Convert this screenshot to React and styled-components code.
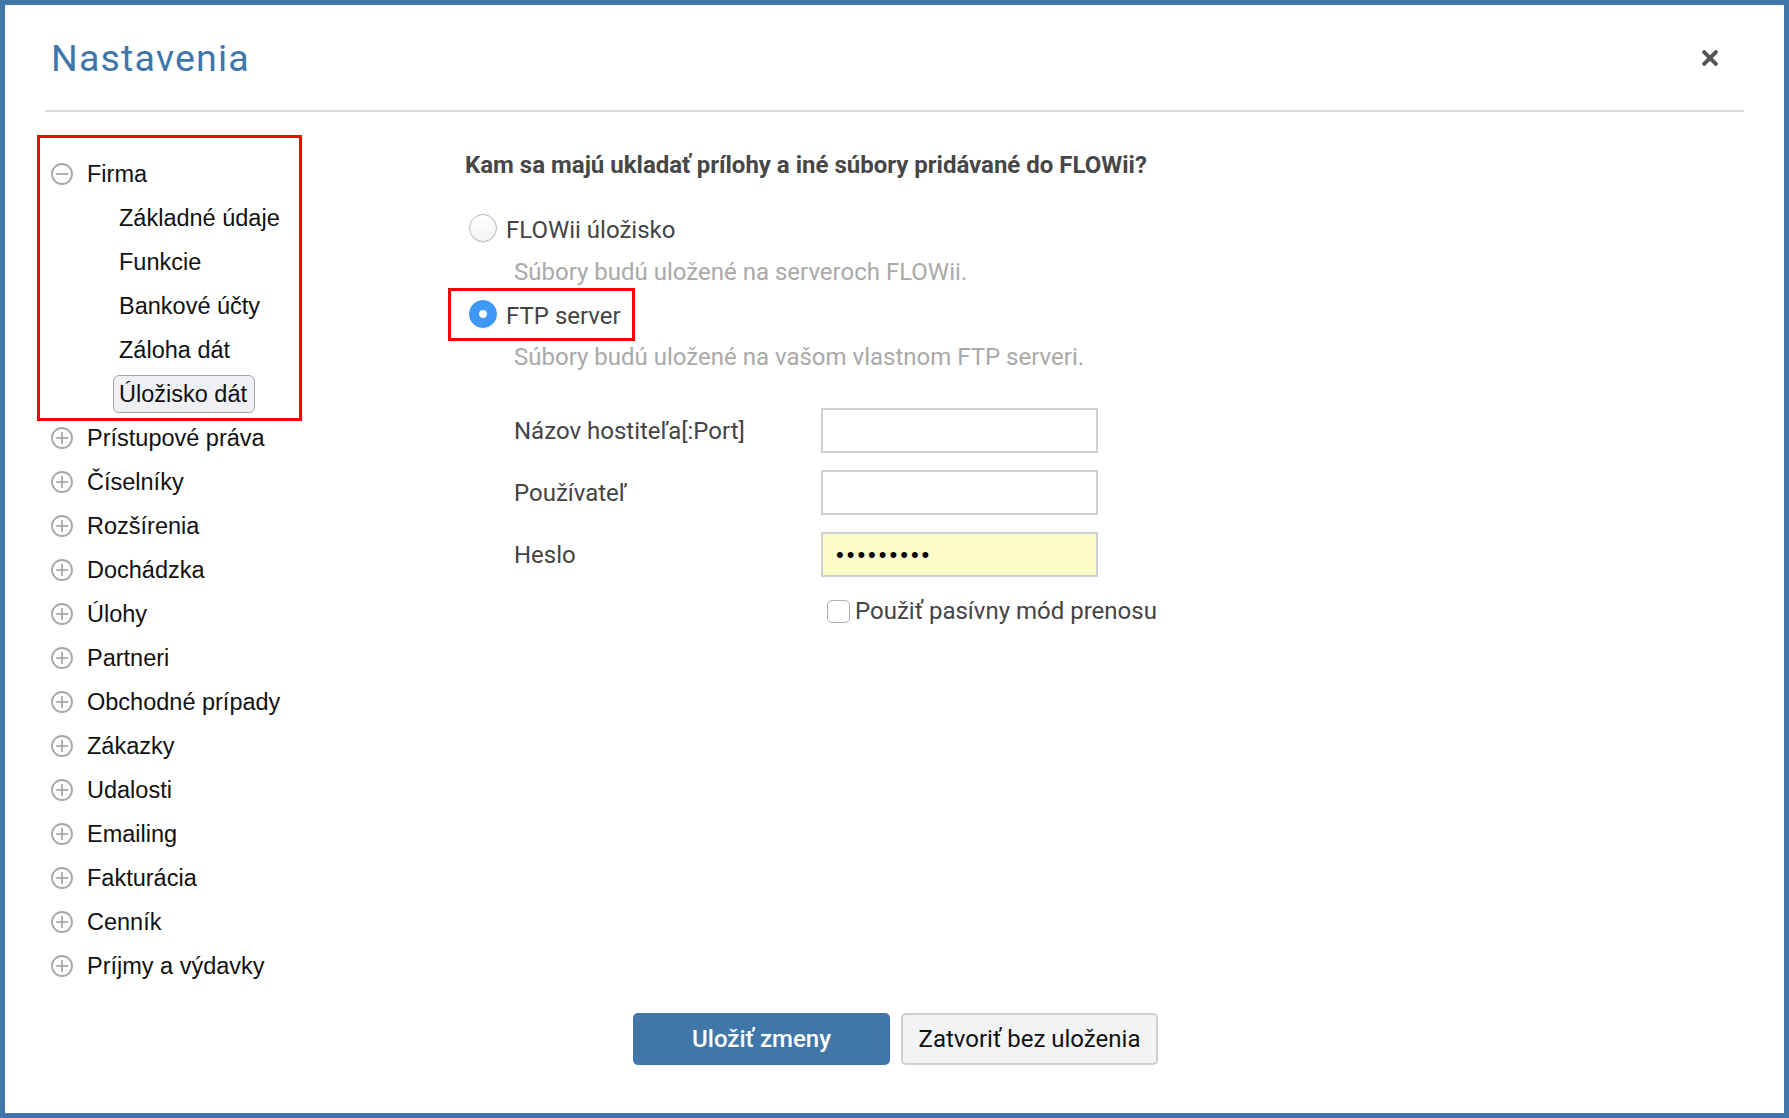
import React from "react";
import styled, { createGlobalStyle } from "styled-components";

const GlobalStyle = createGlobalStyle`
  html, body {
    margin: 0;
    padding: 0;
    background: #fff;
  }
  body {
    font-family: Roboto, "Liberation Sans", Arial, sans-serif;
  }
  * {
    box-sizing: border-box;
  }
`;

const StyledModal = styled.div`
  height: 100vh;
  display: flex;
  flex-direction: column;
  border: 5px solid #3f75a8;
  background: #fff;
`;

const StyledHeader = styled.div`
  margin: 0 40px;
  padding: 31px 26px 30px 6px;
  display: flex;
  align-items: center;
  justify-content: space-between;
  border-bottom: 2px solid #dcdcdc;
`;

const StyledTitle = styled.h1`
  margin: 0;
  font-family: Roboto, sans-serif;
  font-weight: 400;
  font-size: 37.5px;
  line-height: 44px;
  letter-spacing: 1.2px;
  color: #3f76aa;
`;

const StyledClose = styled.button`
  width: 16px;
  height: 16px;
  padding: 0;
  border: none;
  background: none;
  cursor: pointer;
  display: flex;
`;

const StyledBody = styled.div`
  flex: 1;
  display: flex;
  margin: 0 40px;
  padding-top: 40px;
`;

const StyledTree = styled.div`
  width: 420px;
  flex-shrink: 0;
  padding-left: 6px;
`;

const StyledGroup = styled.div`
  position: relative;
`;

const StyledMark = styled.span`
  position: absolute;
  top: ${(p) => p.$top}px;
  left: ${(p) => p.$left}px;
  width: ${(p) => p.$width}px;
  height: ${(p) => p.$height}px;
  border: 3px solid #ff0000;
  pointer-events: none;
`;

const StyledTreeRow = styled.div`
  display: flex;
  align-items: center;
  height: 44px;
  padding-left: ${(p) => p.$indent || 0}px;
  font-family: "Liberation Sans", Arial, sans-serif;
  font-size: 23.5px;
  color: #111;
  cursor: pointer;
`;

const StyledToggle = styled.svg`
  width: 22px;
  height: 22px;
  margin-right: 14px;
  flex-shrink: 0;
`;

const StyledSubLabel = styled.span`
  display: inline-flex;
  align-items: center;
  height: 38px;
  padding: 0 7px 0 5px;
  border: 1.5px solid ${(p) => (p.$active ? "#a4a4a4" : "transparent")};
  border-radius: 6px;
  background: ${(p) => (p.$active ? "#eff0f4" : "transparent")};
`;

const StyledContent = styled.div`
  flex: 1;
  display: flex;
  flex-direction: column;
  align-items: flex-start;
  color: #444;
`;

const StyledQuestion = styled.h2`
  margin: 0;
  font-family: Roboto, sans-serif;
  font-weight: 700;
  font-size: 24px;
  line-height: 26px;
  color: #474747;
`;

const StyledOption = styled.label`
  position: relative;
  display: flex;
  align-items: flex-start;
  height: 34px;
  line-height: 34px;
  margin-top: ${(p) => p.$mt}px;
  padding-left: 4px;
  font-size: 24px;
  color: #444;
  cursor: pointer;
`;

const StyledRadio = styled.input`
  appearance: none;
  width: 28px;
  height: 28px;
  margin: 1px 9px 0 0;
  flex-shrink: 0;
  border-radius: 50%;
  border: 1px solid #b9b9b9;
  background: linear-gradient(#ffffff, #f4f4f4);
  box-shadow: 0 1px 1px rgba(0, 0, 0, 0.08);

  &:checked {
    border-color: #3a90ee;
    background: radial-gradient(circle, #ffffff 0 3.5px, #3d98f8 4.5px);
  }
`;

const StyledDesc = styled.p`
  margin: ${(p) => p.$mt}px 0 0;
  padding-left: 49px;
  font-size: 24px;
  line-height: 30px;
  color: #a9a9a9;
`;

const StyledForm = styled.div`
  display: grid;
  grid-template-columns: 307px 277px;
  row-gap: 17px;
  align-items: center;
  margin-top: 36px;
  padding-left: 49px;
`;

const StyledLabel = styled.label`
  font-size: 24px;
  color: #444;
`;

const StyledInput = styled.input`
  width: 277px;
  height: 45px;
  padding: 0 13px;
  border: 2px solid #d0d0d0;
  background: ${(p) => (p.$filled ? "#fbfcc8" : "#fff")};
  font-family: "Liberation Sans", Arial, sans-serif;
  font-size: 22px;
  letter-spacing: 3px;
  color: #000;
  outline: none;
`;

const StyledCheckRow = styled.label`
  grid-column: 2;
  display: flex;
  align-items: center;
  margin-top: 4px;
  padding-left: 6px;
  font-size: 24px;
  line-height: 26px;
  color: #444;
  white-space: nowrap;
  cursor: pointer;
`;

const StyledCheckbox = styled.input`
  appearance: none;
  flex-shrink: 0;
  width: 23px;
  height: 23px;
  margin: 0 5px 0 0;
  border: 1.5px solid #b0b0b0;
  border-radius: 5px;
  background: #fff;
`;

const StyledFooter = styled.div`
  display: flex;
  justify-content: center;
  gap: 11px;
  margin: 0 40px;
  padding: 0 0 48px 2px;
`;

const StyledButton = styled.button`
  width: 257px;
  height: 52px;
  border-radius: 5px;
  border: ${(p) => (p.$primary ? "none" : "2px solid #cfcfcf")};
  background: ${(p) => (p.$primary ? "#4176a9" : "#f2f3f5")};
  color: ${(p) => (p.$primary ? "#fff" : "#111")};
  font-family: Roboto, sans-serif;
  font-weight: ${(p) => (p.$primary ? 500 : 400)};
  font-size: 24px;
  cursor: pointer;
`;

const Toggle = ({ open }) => (
  <StyledToggle viewBox="0 0 22 22">
    <circle cx="11" cy="11" r="10" fill="none" stroke="#a8a8a8" strokeWidth="1.8" />
    <line x1="5" y1="11" x2="17" y2="11" stroke="#a8a8a8" strokeWidth="1.8" />
    {!open && <line x1="11" y1="5" x2="11" y2="17" stroke="#a8a8a8" strokeWidth="1.8" />}
  </StyledToggle>
);

const firmaItems = ["Základné údaje", "Funkcie", "Bankové účty", "Záloha dát", "Úložisko dát"];

const sections = [
  "Prístupové práva",
  "Číselníky",
  "Rozšírenia",
  "Dochádzka",
  "Úlohy",
  "Partneri",
  "Obchodné prípady",
  "Zákazky",
  "Udalosti",
  "Emailing",
  "Fakturácia",
  "Cenník",
  "Príjmy a výdavky",
];

const App = () => {
  return (
    <>
      <GlobalStyle />
      <StyledModal>
        <StyledHeader>
          <StyledTitle>Nastavenia</StyledTitle>
          <StyledClose aria-label="Zavrieť">
            <svg width="16" height="16" viewBox="0 0 16 16">
              <path d="M2.2 2.2 L13.8 13.8 M13.8 2.2 L2.2 13.8" stroke="#555" strokeWidth="4" strokeLinecap="round" />
            </svg>
          </StyledClose>
        </StyledHeader>

        <StyledBody>
          <StyledTree>
            <StyledGroup>
              <StyledMark $top={-17} $left={-14} $width={265} $height={286} />
              <StyledTreeRow>
                <Toggle open />
                Firma
              </StyledTreeRow>
              {firmaItems.map((item) => (
                <StyledTreeRow key={item} $indent={62}>
                  <StyledSubLabel $active={item === "Úložisko dát"}>{item}</StyledSubLabel>
                </StyledTreeRow>
              ))}
            </StyledGroup>
            {sections.map((s) => (
              <StyledTreeRow key={s}>
                <Toggle />
                {s}
              </StyledTreeRow>
            ))}
          </StyledTree>

          <StyledContent>
            <StyledQuestion>Kam sa majú ukladať prílohy a iné súbory pridávané do FLOWii?</StyledQuestion>

            <StyledOption $mt={35}>
              <StyledRadio type="radio" name="storage" />
              FLOWii úložisko
            </StyledOption>
            <StyledDesc $mt={10}>Súbory budú uložené na serveroch FLOWii.</StyledDesc>

            <StyledOption $mt={12}>
              <StyledMark $top={-11} $left={-17} $width={187} $height={53} />
              <StyledRadio type="radio" name="storage" defaultChecked />
              FTP server
            </StyledOption>
            <StyledDesc $mt={9}>Súbory budú uložené na vašom vlastnom FTP serveri.</StyledDesc>

            <StyledForm>
              <StyledLabel htmlFor="ftp-host">Názov hostiteľa[:Port]</StyledLabel>
              <StyledInput id="ftp-host" type="text" />
              <StyledLabel htmlFor="ftp-user">Používateľ</StyledLabel>
              <StyledInput id="ftp-user" type="text" />
              <StyledLabel htmlFor="ftp-pass">Heslo</StyledLabel>
              <StyledInput id="ftp-pass" type="password" defaultValue="123456789" $filled />
              <StyledCheckRow>
                <StyledCheckbox type="checkbox" />
                Použiť pasívny mód prenosu
              </StyledCheckRow>
            </StyledForm>
          </StyledContent>
        </StyledBody>

        <StyledFooter>
          <StyledButton $primary>Uložiť zmeny</StyledButton>
          <StyledButton>Zatvoriť bez uloženia</StyledButton>
        </StyledFooter>
      </StyledModal>
    </>
  );
};

export default App;
